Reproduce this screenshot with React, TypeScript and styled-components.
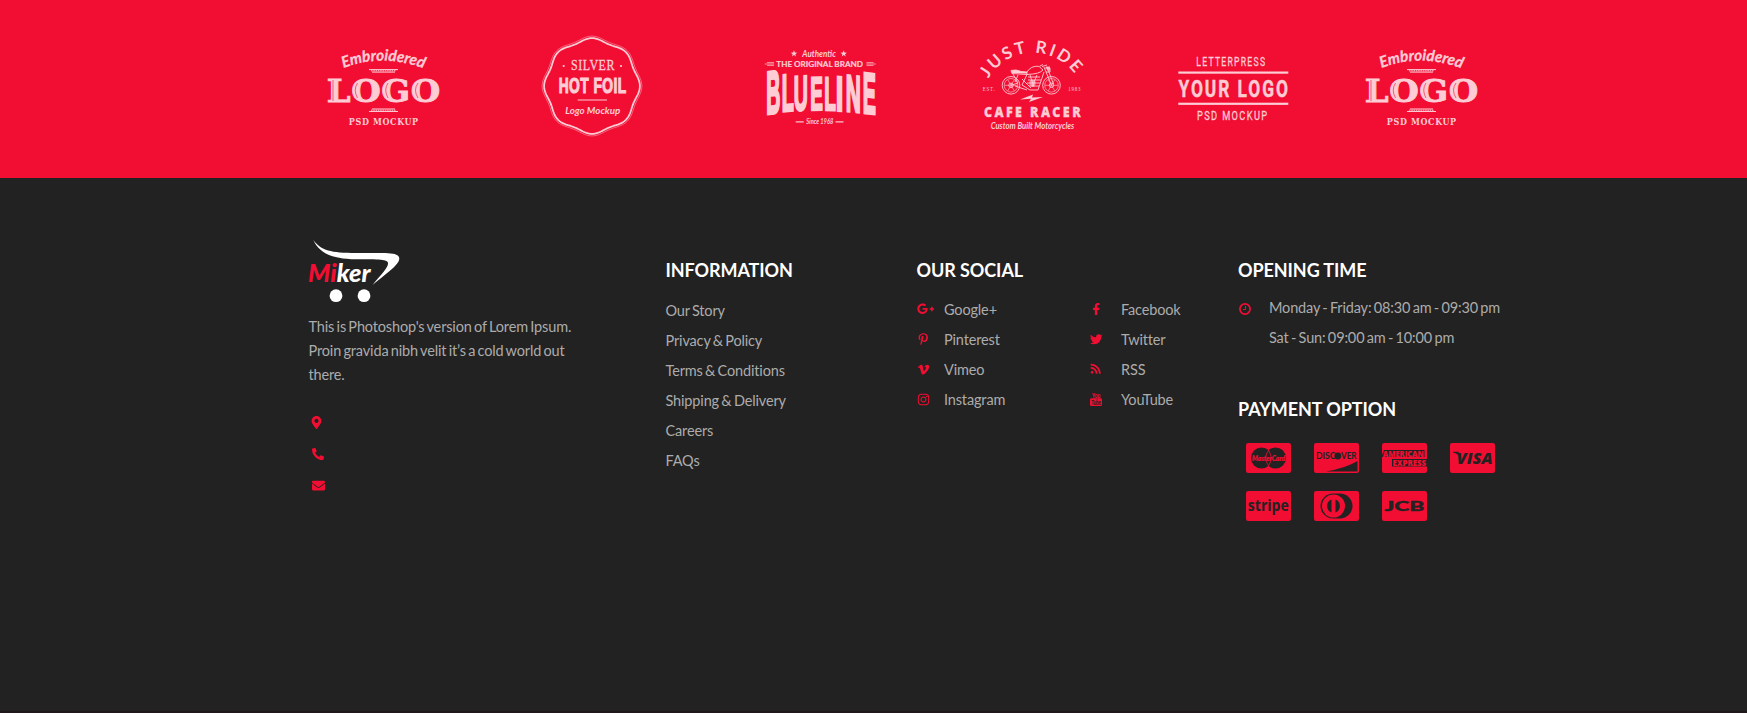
import React from "react";
import styled, { createGlobalStyle } from "styled-components";
import {
  FaEnvelope,
  FaFacebookF,
  FaGooglePlusG,
  FaInstagram,
  FaMapMarkerAlt,
  FaPhoneAlt,
  FaPinterestP,
  FaRss,
  FaTwitter,
  FaVimeoV,
} from "react-icons/fa";

const RED = "#f20e33";
const DARK = "#222222";
const PINK = "#fdccd5";

const GlobalStyle = createGlobalStyle`
  body { margin: 0; background: ${DARK}; font-family: Lato, "Liberation Sans", sans-serif; }
`;

const Page = styled.div`
  height: 713px;
  overflow: hidden;
  display: flex;
  flex-direction: column;
`;
const BrandStrip = styled.section`
  height: 178px;
  background: ${RED};
  display: flex;
  padding-left: 280px;
  flex: none;
`;
const BrandSvg = styled.svg`
  width: 207.66px;
  height: 178px;
  flex: none;
  fill: ${PINK};
`;
const Footer = styled.footer`
  flex: 1;
  box-sizing: border-box;
  padding: 62px 0 0 308px;
  display: grid;
  grid-template-columns: 357.5px 251px 321.5px 290px;
  align-content: start;
  color: #acacac;
  font-size: 14.5px;
  letter-spacing: -0.15px;
  word-spacing: -1.2px;
`;
const BottomLine = styled.div`
  height: 2px;
  background: #1f171b;
`;
const Column = styled.div<{ $top?: number }>`
  padding-top: ${(p) => p.$top ?? 0}px;
`;
const Heading = styled.h4`
  margin: 0;
  height: 24px;
  font-size: 18px;
  line-height: 24px;
  font-weight: 700;
  letter-spacing: -0.08px;
  word-spacing: 0;
  color: #fff;
  white-space: nowrap;
`;
const MikerSvg = styled.svg`
  display: block;
  width: 93px;
  height: 63px;
  letter-spacing: 0;
`;
const About = styled.p`
  margin: 12px 0 0 0.5px;
  width: 275px;
  line-height: 24px;
`;
const ContactList = styled.ul`
  list-style: none;
  margin: 20px 0 0;
  padding: 0 0 0 4px;
`;
const ContactItem = styled.li<{ $shift?: number }>`
  height: 31.5px;
  display: flex;
  align-items: center;
  margin-left: ${(p) => p.$shift ?? 0}px;
  color: ${RED};
`;
const LinkList = styled.ul`
  list-style: none;
  margin: 14px 0 0;
  padding: 0;
  line-height: 30px;
  white-space: nowrap;
`;
const SocialGrid = styled.ul`
  list-style: none;
  margin: 13px 0 0;
  padding: 0;
  display: grid;
  grid-template-columns: 173.5px 1fr;
  grid-auto-rows: 30px;
  line-height: 30px;
`;
const SocialItem = styled.li<{ $label: number }>`
  display: grid;
  grid-template-columns: ${(p) => p.$label}px auto;
`;
const IconCell = styled.span`
  display: flex;
  align-items: center;
  height: 28px;
  color: ${RED};
`;
const Hours = styled.div`
  margin: 11px 0 44px;
  display: grid;
  grid-template-columns: 31px auto;
  grid-auto-rows: 30px;
  line-height: 30px;
  white-space: nowrap;
`;
const HoursIcon = styled.span`
  display: flex;
  align-items: center;
  height: 32px;
  padding-left: 1px;
`;
const Cards = styled.div`
  margin: 22px 0 0 8px;
  display: grid;
  grid-template-columns: repeat(4, 45px);
  grid-auto-rows: 30px;
  gap: 18px 23px;
`;
const Card = styled.svg`
  width: 45px;
  height: 30px;
  display: block;
  fill: ${DARK};
  letter-spacing: 0;
  word-spacing: 0;
`;

type FitProps = {
  x: number;
  w: number;
  y: number;
  size: number;
  font?: string;
  weight?: number;
  italic?: boolean;
  fill?: string;
  stroke?: string;
  strokeWidth?: number;
  spacing?: number;
  children: string;
};
/* A line of text stretched or squeezed to an exact width. */
const Fit = ({ x, w, y, size, font = "Lato", weight = 700, italic, fill, stroke, strokeWidth, spacing, children }: FitProps) => (
  <text
    x={x}
    y={y}
    fontFamily={`${font}, sans-serif`}
    fontSize={size}
    fontWeight={weight}
    fontStyle={italic ? "italic" : undefined}
    fill={fill}
    stroke={stroke}
    strokeWidth={strokeWidth}
    letterSpacing={spacing}
    textLength={w}
    lengthAdjust="spacingAndGlyphs"
  >
    {children}
  </text>
);

const Ornament = ({ y, flip }: { y: number; flip?: boolean }) => (
  <g stroke={PINK} strokeWidth="1" fill="none">
    <path d={`M${flip ? 92 : 89} ${y}H${flip ? 115 : 118}`} />
    <path d={`M91 ${y + 1.2}H116`} strokeDasharray="1.5 .8" />
    <path d={`M${flip ? 89 : 92} ${y + 2.5}H${flip ? 118 : 115}`} />
  </g>
);

const Embroidered = ({ id }: { id: string }) => (
  <BrandSvg viewBox="0 0 207.66 178">
    <path id={id} d="M63.500 68Q102 53 144 68.500" fill="none" />
    <text fontFamily="Lato, sans-serif" fontStyle="italic" fontWeight="700" fontSize="15.500" stroke={PINK} strokeWidth=".3">
      <textPath href={`#${id}`} textLength="82" lengthAdjust="spacingAndGlyphs">Embroidered</textPath>
    </text>
    <Ornament y={69.6} />
    <Fit x={46.800} w={114} y={102} size={32} font="'DejaVu Serif'" spacing={0.5} stroke={PINK} strokeWidth={0.9}>LOGO</Fit>
    <g fill="none" stroke={RED} strokeWidth=".8" opacity=".75">
      <path d="M53 80V101M77.500 83Q73 90 77.500 98M108 83Q103.500 90 108 98M138 83Q133 90 138 98" />
    </g>
    <Ornament y={109} flip />
    <Fit x={68.800} w={70} y={125} size={9.700} font="'DejaVu Serif'" spacing={0.8}>PSD MOCKUP</Fit>
  </BrandSvg>
);

const scallop = (r: number) => {
  const pts: string[] = [];
  for (let i = 0; i < 160; i++) {
    const a = (i / 160) * Math.PI * 2;
    const q = r + 1.5 * Math.cos(8 * a);
    pts.push(`${(104 + q * Math.cos(a)).toFixed(2)} ${(86 + q * Math.sin(a)).toFixed(2)}`);
  }
  return `M${pts.join("L")}Z`;
};

const HotFoil = () => (
  <BrandSvg viewBox="0 0 207.66 178">
    <path d={scallop(46.4)} fill="none" stroke={PINK} strokeWidth="1.8" />
    <path d={scallop(48.4)} fill="none" stroke={PINK} strokeWidth=".6" opacity=".75" />
    <circle cx="75.700" cy="66" r="1.100" />
    <circle cx="133" cy="66" r="1.100" />
    <Fit x={83} w={44} y={70} size={14} font="'Liberation Serif'" weight={400} spacing={0.6} stroke={PINK} strokeWidth={0.3}>SILVER</Fit>
    <Fit x={70.700} w={68} y={93.500} size={21.200} font="'Liberation Sans'" weight={700} spacing={0.7} stroke={PINK} strokeWidth={1.2}>HOT FOIL</Fit>
    <rect x="89.700" y="99.500" width="29.300" height="1" />
    <Fit x={77.300} w={55} y={114.300} size={10} italic>Logo Mockup</Fit>
  </BrandSvg>
);

const star = (cx: number, cy: number) => {
  const pts = Array.from({ length: 10 }, (_, i) => {
    const r = i % 2 ? 1.4 : 3.4;
    const a = -Math.PI / 2 + (i * Math.PI) / 5;
    return `${cx + r * Math.cos(a)},${cy + r * Math.sin(a)}`;
  });
  return pts.join(" ");
};

/* letter, left edge, width, top, bottom, lean of the baseline */
const blueline: [string, number, number, number, number, number][] = [
  ["B", 72, 12.5, 71, 114, -0.12],
  ["L", 87.5, 10.5, 74, 111.5, -0.1],
  ["U", 99.5, 12.5, 75.5, 110.5, -0.06],
  ["E", 116, 11, 76.5, 110, -0.02],
  ["L", 130, 10, 76.5, 110, 0.02],
  ["I", 141.5, 6, 75.5, 110.5, 0.06],
  ["N", 151.5, 13.5, 74, 111, 0.1],
  ["E", 168.5, 11.5, 71.5, 112.5, 0.12],
];

const Blueline = () => (
  <BrandSvg viewBox="0 0 207.66 178">
    <polygon points={star(99, 53.7)} />
    <polygon points={star(148.7, 53.7)} />
    <Fit x={107.300} w={33.500} y={56.700} size={9.500} italic weight={700}>Authentic</Fit>
    <Fit x={81.300} w={86.700} y={66.700} size={7.500} stroke={PINK} strokeWidth={0.2}>THE ORIGINAL BRAND</Fit>
    <path d="M72 62.600h7M69.700 64h9.500M72 65.400h7M171.500 62.600h7M171.300 64h9.500M171.500 65.400h7" stroke={PINK} strokeWidth=".7" />
    {blueline.map(([ch, x, w, top, bottom, lean], i) => (
      <g key={i} transform={`matrix(1 ${lean} 0 ${(bottom - top) / 20} ${x} ${bottom})`}>
        <text
          x="-0.800"
          fontFamily="'Liberation Sans', sans-serif"
          fontWeight="700"
          fontSize="28"
          textLength={w + 1.6}
          lengthAdjust="spacingAndGlyphs"
          stroke={PINK}
          strokeWidth="1.500"
        >
          {ch}
        </text>
      </g>
    ))}
    <rect x="100.700" y="121.300" width="8" height="1.200" />
    <rect x="140.500" y="121.300" width="8" height="1.200" />
    <Fit x={111.300} w={27} y={124} size={7.500} italic>Since 1968</Fit>
  </BrandSvg>
);

const CafeRacer = () => (
  <BrandSvg viewBox="0 0 207.66 178">
    <path id="ride-arc" d="M85.500 78.500A51.500 51.500 0 0 1 177.500 84" fill="none" />
    <text fontFamily="Lato, sans-serif" fontWeight="700" fontSize="17">
      <textPath href="#ride-arc" textLength="102" lengthAdjust="spacing">JUST RIDE</textPath>
    </text>
    <g fill="none" stroke={PINK} strokeWidth=".9">
      {[108, 148.500].map((cx) => (
        <g key={cx}>
          <circle cx={cx} cy="85.300" r="8.800" />
          <circle cx={cx} cy="85.300" r="6.800" strokeWidth=".6" />
          <circle cx={cx} cy="85.300" r="2.200" />
          <path d={`M${cx - 6.5} 85.300h13M${cx - 3.3} 79.700l6.600 11.200M${cx + 3.3} 79.700l-6.600 11.200`} strokeWidth=".6" />
        </g>
      ))}
      <path d="M108 70.500Q113 69 118 71.500L124 72V74.500L109 73.500ZM124 72Q128 65.500 136 66.300L140 70Q137 74 124 74.500M110 74L115 83L108 85.300M115 75L112 82M141 67L148.500 85.300M144 67L150.500 84M139 66.500L144 65M137 66L140 64.500M124 74.500L119 85L127 90H135L141 72M119 79L128 88M125 77H137M125 80H138M124 83H137M126 86H136M112 86L124 90M142 68H147V72H143M127 75L131 87M134 75L129 87" />
    </g>
    <g fill={PINK}>
      <path d="M108 70.500Q114 69 118 71.500L124 72V73.500L109 73Z" />
      <circle cx="129.500" cy="83" r="3.200" opacity=".65" />
      <path d="M143 66.500h4v4h-3z" opacity=".8" />
      <path d="M117 99.500L130 94.500L129 97.500L140 97L126 102L128 98.700Z" />
    </g>
    <Fit x={79.700} w={12.800} y={91} size={5.500} font="'Liberation Serif'" weight={400} spacing={1}>EST.</Fit>
    <Fit x={165.300} w={13} y={91} size={5.500} font="'Liberation Serif'" weight={400} spacing={1}>1983</Fit>
    <Fit x={81} w={99} y={117.300} size={14} font="'Open Sans'" weight={800} spacing={2.700} stroke={PINK} strokeWidth={0.3}>CAFE RACER</Fit>
    <Fit x={87.700} w={83.500} y={129} size={8.700} italic>Custom Built Motorcycles</Fit>
  </BrandSvg>
);

const YourLogo = () => (
  <BrandSvg viewBox="0 0 207.66 178">
    <Fit x={85.300} w={70} y={66} size={13.500} font="Roboto" weight={400} spacing={2} stroke={PINK} strokeWidth={0.3}>LETTERPRESS</Fit>
    <rect x="67.300" y="71.500" width="110" height="2.200" />
    <Fit x={67.500} w={111.500} y={97.300} size={24.800} font="Roboto" weight={700} spacing={2.800} stroke={PINK} strokeWidth={0.5}>YOUR LOGO</Fit>
    <rect x="67.300" y="102.700" width="110" height="2.200" />
    <Fit x={86} w={71.500} y={120} size={13.500} font="Roboto" weight={400} spacing={2} stroke={PINK} strokeWidth={0.3}>PSD MOCKUP</Fit>
  </BrandSvg>
);

const MikerLogo = () => (
  <MikerSvg viewBox="0 0 93 63">
    <path
      fill="#fff"
      d="M5.300 0C13 10.500 23 13 48 13H74C86 13 91.300 14.500 91.300 18.500C91.300 24 83 30 64.500 45C74 33.500 80.500 27 80 23C79.500 19.500 72 19.500 48 19.300C22 19 11 12 5.300 0Z"
    />
    <circle cx="28" cy="55.700" r="6.400" fill="#fff" />
    <circle cx="56" cy="55.700" r="6.400" fill="#fff" />
    <text x="0" y="41.700" fontFamily="Lato, sans-serif" fontWeight="900" fontStyle="italic" fontSize="25.500" textLength="62.500" lengthAdjust="spacingAndGlyphs" fill="#fff">
      <tspan fill={RED}>Mi</tspan>ker
    </text>
  </MikerSvg>
);

const ClockIcon = () => (
  <svg width="12" height="12" viewBox="0 0 12 12" fill="none" stroke={RED}>
    <circle cx="6" cy="6" r="5.100" strokeWidth="1.700" />
    <path d="M6.500 3V6.500H4" strokeWidth="1" />
  </svg>
);

const YouTubeIcon = () => (
  <svg width="12" height="14" viewBox="0 0 12 14">
    <Fit x={2} w={8} y={5.500} size={7} font="Roboto" fill={RED}>You</Fit>
    <rect y="6.300" width="12" height="7.700" rx="1.300" fill={RED} />
    <Fit x={1.200} w={9.600} y={12.600} size={6.500} font="Roboto" fill={DARK}>Tube</Fit>
  </svg>
);

const CardBase = () => <rect width="45" height="30" rx="2.200" fill={RED} />;

const PaymentCards = () => (
  <Cards>
    <Card viewBox="0 0 45 30">
      <CardBase />
      <circle cx="15.500" cy="15" r="10.500" />
      <circle cx="29.500" cy="15" r="10.500" />
      <path d="M22.500 7.200Q17 15 22.500 22.800Q28 15 22.500 7.200Z" fill="none" stroke={RED} strokeWidth=".8" />
      <Fit x={6} w={33} y={17.800} size={8} italic weight={900} fill={RED} stroke={RED} strokeWidth={0.2}>MasterCard</Fit>
    </Card>
    <Card viewBox="0 0 45 30">
      <CardBase />
      <Fit x={2} w={19.500} y={16} size={8.800}>DISC</Fit>
      <circle cx="23.800" cy="13" r="3.400" />
      <Fit x={27} w={15.500} y={16} size={8.800}>VER</Fit>
      <path d="M43.500 18V27.500Q43.500 28.500 42.500 28.500H12Q32 25 43.500 18Z" />
    </Card>
    <Card viewBox="0 0 45 30">
      <CardBase />
      <path d="M2 7H42.500V14H0V12ZM10 16H45V23.500H10Z" />
      <Fit x={0.800} w={41} y={13.500} size={8} font="'Open Sans'" weight={800} fill={RED}>AMERICAN</Fit>
      <Fit x={10.500} w={33.500} y={22.800} size={8} font="'Open Sans'" weight={800} fill={RED}>EXPRESS</Fit>
    </Card>
    <Card viewBox="0 0 45 30">
      <CardBase />
      <path d="M3 8.800H8.500L10 14Q7 10 3 9.500Z" />
      <Fit x={6.500} w={36} y={21} size={16.500} font="'Open Sans'" italic weight={800}>VISA</Fit>
    </Card>
    <Card viewBox="0 0 45 30">
      <CardBase />
      <Fit x={1.800} w={41} y={20} size={16.500} font="'Open Sans'" weight={700}>stripe</Fit>
    </Card>
    <Card viewBox="0 0 45 30">
      <CardBase />
      <path d="M19 2.500H26A12.500 12.500 0 0 1 26 27.500H19A12.500 12.500 0 0 1 19 2.500Z" />
      <circle cx="19.500" cy="15" r="11.500" fill={RED} />
      <path d="M17.500 8.500V21.500A7 7 0 0 1 17.500 8.500ZM21.500 8.500A7 7 0 0 1 21.500 21.500Z" />
    </Card>
    <Card viewBox="0 0 45 30">
      <CardBase />
      <Fit x={2.500} w={40} y={19.800} size={13.500} weight={900} stroke={DARK} strokeWidth={0.4}>JCB</Fit>
    </Card>
  </Cards>
);

const social: [React.ReactNode, string][] = [
  [<FaGooglePlusG size={17.5} />, "Google+"],
  [<FaFacebookF size={12.5} />, "Facebook"],
  [<FaPinterestP size={12.5} />, "Pinterest"],
  [<FaTwitter size={12.5} />, "Twitter"],
  [<FaVimeoV size={13} />, "Vimeo"],
  [<FaRss size={11.5} />, "RSS"],
  [<FaInstagram size={13} />, "Instagram"],
  [<YouTubeIcon />, "YouTube"],
];

export default function App() {
  return (
    <Page>
      <GlobalStyle />
      <BrandStrip>
        <Embroidered id="emb-first" />
        <HotFoil />
        <Blueline />
        <CafeRacer />
        <YourLogo />
        <Embroidered id="emb-last" />
      </BrandStrip>
      <Footer>
        <Column>
          <MikerLogo />
          <About>This is Photoshop's version of Lorem Ipsum. Proin gravida nibh velit it’s a cold world out there.</About>
          <ContactList>
            <ContactItem $shift={-2}><FaMapMarkerAlt size={13} /></ContactItem>
            <ContactItem><FaPhoneAlt size={12} /></ContactItem>
            <ContactItem><FaEnvelope size={13} /></ContactItem>
          </ContactList>
        </Column>
        <Column $top={18}>
          <Heading>INFORMATION</Heading>
          <LinkList>
            {["Our Story", "Privacy & Policy", "Terms & Conditions", "Shipping & Delivery", "Careers", "FAQs"].map((t) => (
              <li key={t}>{t}</li>
            ))}
          </LinkList>
        </Column>
        <Column $top={18}>
          <Heading>OUR SOCIAL</Heading>
          <SocialGrid>
            {social.map(([icon, label], i) => (
              <SocialItem key={label} $label={i % 2 ? 31 : 27.5}>
                <IconCell>{icon}</IconCell>
                <span>{label}</span>
              </SocialItem>
            ))}
          </SocialGrid>
        </Column>
        <Column $top={18}>
          <Heading>OPENING TIME</Heading>
          <Hours>
            <HoursIcon><ClockIcon /></HoursIcon>
            <span>Monday - Friday: 08:30 am - 09:30 pm</span>
            <span />
            <span>Sat - Sun: 09:00 am - 10:00 pm</span>
          </Hours>
          <Heading>PAYMENT OPTION</Heading>
          <PaymentCards />
        </Column>
      </Footer>
      <BottomLine />
    </Page>
  );
}
